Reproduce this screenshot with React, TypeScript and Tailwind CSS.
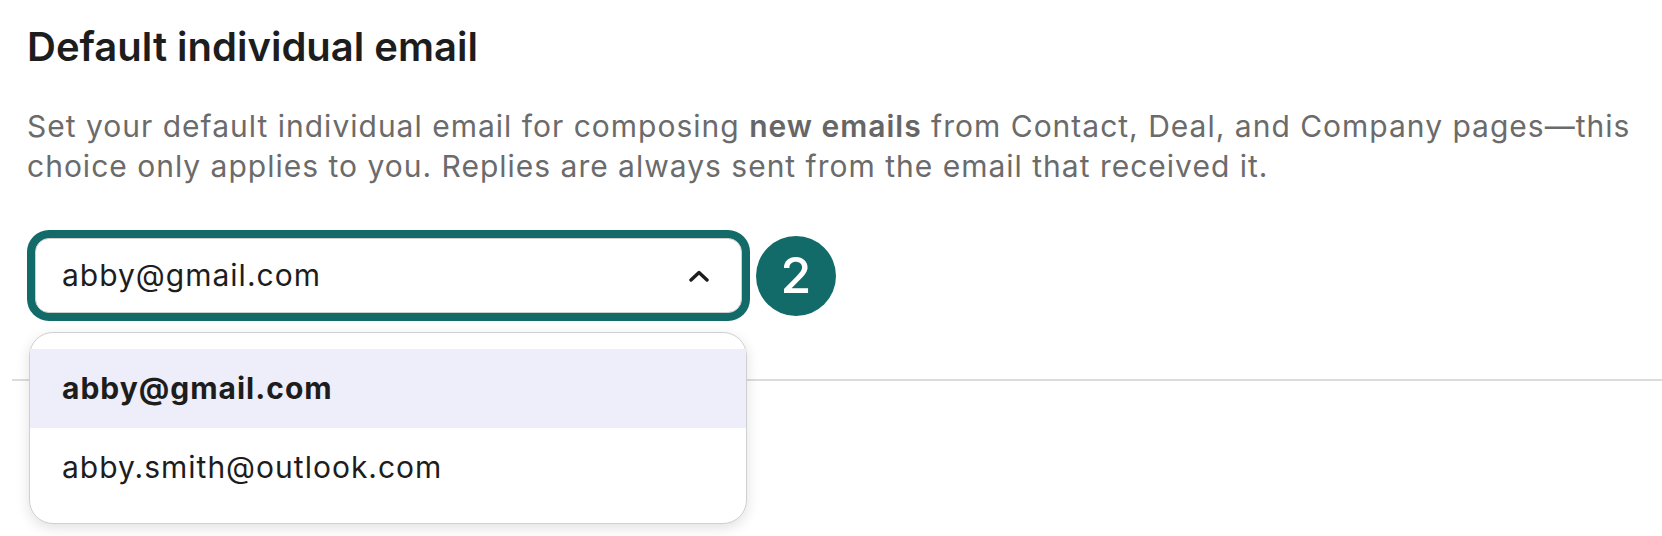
import { useState } from "react";

const emails = ["abby@gmail.com", "abby.smith@outlook.com"];

export default function App() {
  const [selected, setSelected] = useState(emails[0]);

  return (
    <div className="min-h-screen bg-white pl-[12px] pt-[23px] font-[Inter,sans-serif]">
      <section className="pl-[15px] pr-[30px]">
        <h2 className="text-[40px] font-semibold leading-[48px] text-[#1d1d1d]">
          Default individual email
        </h2>
        <p className="mt-[35px] text-[30px] leading-[40px] tracking-[1px] text-[#6b6b6b]">
          Set your default individual email for composing{" "}
          <span className="font-semibold text-[#666666]">new emails</span> from
          Contact, Deal, and Company pages—this choice only applies to you.
          Replies are always sent from the email that received it.
        </p>

        <div className="relative mt-[44px] flex items-center">
          <div className="w-[723px] rounded-[22px] bg-[#126b69] p-[8px]">
            <button
              type="button"
              className="flex h-[75px] w-full items-center justify-between rounded-[14px] border border-[#cfcfcf] bg-white pl-[26px] pr-[32px] text-[30px] tracking-[1px] text-[#1d1d1d]"
            >
              <span>{selected}</span>
              <svg
                width="20"
                height="12"
                viewBox="0 0 20 12"
                fill="none"
                stroke="#1d1d1d"
                strokeWidth="3.4"
                strokeLinecap="round"
                strokeLinejoin="round"
              >
                <path d="M2 10 L10 2.5 L18 10" />
              </svg>
            </button>
          </div>
          <div className="ml-[6px] flex h-[80px] w-[80px] items-center justify-center rounded-full bg-[#126b69] text-[50px] font-medium text-white">
            2
          </div>

          <div className="absolute left-[2px] top-[102px] z-10 w-[718px] rounded-[24px] border border-[#d0d0d0] bg-white py-4 shadow-[0_4px_14px_rgba(0,0,0,0.12)]">
            {emails.map((email) => (
              <div
                key={email}
                onClick={() => setSelected(email)}
                className={
                  email === selected
                    ? "flex h-[79px] items-center bg-[#eeedfa] pl-8 text-[30px] font-bold tracking-[1px] text-[#1d1d1d]"
                    : "flex h-[79px] items-center pl-8 text-[30px] tracking-[1px] text-[#1d1d1d]"
                }
              >
                {email}
              </div>
            ))}
          </div>
        </div>
      </section>

      <div className="mt-[58px] h-[2px] bg-[#dcdcdc]" />
    </div>
  );
}
